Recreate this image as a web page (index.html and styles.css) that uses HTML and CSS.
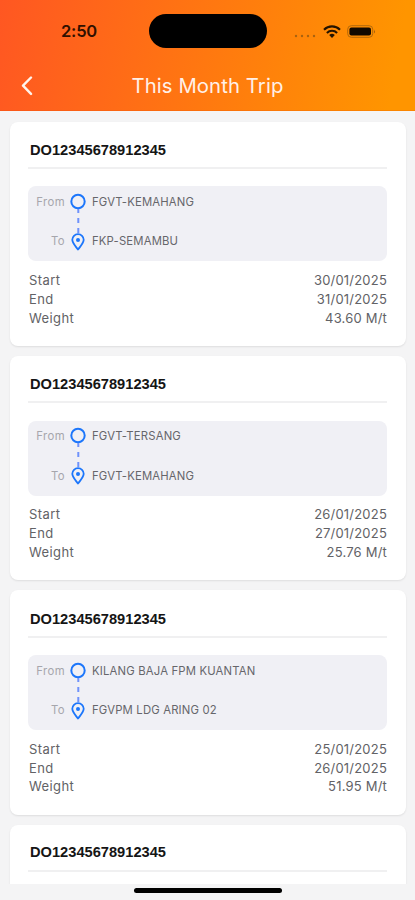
FILE: index.html
```html
<!DOCTYPE html>
<html lang="en">
<head>
<meta charset="utf-8">
<title>This Month Trip</title>
<link rel="stylesheet" href="styles.css">
</head>
<body>
<svg class="defs" aria-hidden="true">
  <symbol id="route" viewBox="0 0 18 60">
    <circle cx="9" cy="8.500" r="6.700" fill="none" stroke="#1c76fb" stroke-width="2"/>
    <path d="M9.300 16v4M9.300 25v5M9.300 35v5" fill="none" stroke="#6f92fb" stroke-width="2"/>
    <path d="M9 56.500C6.200 52.800 3.300 50 3.300 46.800a5.700 5.700 0 0 1 11.400 0C14.700 50 11.800 52.800 9 56.500Z" fill="none" stroke="#1c76fb" stroke-width="1.800" stroke-linejoin="round"/>
    <circle cx="9" cy="47" r="2" fill="#1c76fb"/>
  </symbol>
</svg>
<div class="screen">
  <header class="header">
    <div class="status">
      <span class="time">2:50</span>
      <span class="island"></span>
      <span class="indicators">
        <svg class="dots" viewBox="0 0 22 4"><g fill="#a96310"><circle cx="2" cy="2" r="1.200"/><circle cx="8" cy="2" r="1.200"/><circle cx="14" cy="2" r="1.200"/><circle cx="20" cy="2" r="1.200"/></g></svg>
        <svg class="wifi" viewBox="0 0 18 13"><g fill="none" stroke="#241400" stroke-width="2.100"><path d="M1 4.700a11.400 11.400 0 0 1 16 0"/><path d="M3.900 7.900a7.200 7.200 0 0 1 10.200 0"/></g><path d="M6.200 10.100a4 4 0 0 1 5.600 0L9 12.900Z" fill="#241400"/></svg>
        <svg class="battery" viewBox="0 0 29 13"><rect x=".7" y=".7" width="25" height="11.600" rx="3.600" fill="none" stroke="#b2690c"/><rect x="2.400" y="2.400" width="21.600" height="8.200" rx="2" fill="#120900"/><path d="M27 4.500q1.800 2 0 4Z" fill="#a45e0c"/></svg>
      </span>
    </div>
    <div class="nav">
      <svg class="back" viewBox="0 0 12 20"><path d="M10 1.500 2 9.700l8 8.200" fill="none" stroke="#fff4ec" stroke-width="2.400" stroke-linecap="round" stroke-linejoin="round"/></svg>
      <h1>This Month Trip</h1>
    </div>
  </header>
  <main class="list">
    <article class="card">
      <h2>DO12345678912345</h2>
      <div class="trip">
        <div class="ends"><span>From</span><span>To</span></div>
        <svg class="route"><use href="#route"/></svg>
        <div class="places"><span>FGVT-KEMAHANG</span><span>FKP-SEMAMBU</span></div>
      </div>
      <dl><div><dt>Start</dt><dd>30/01/2025</dd></div><div><dt>End</dt><dd>31/01/2025</dd></div><div><dt>Weight</dt><dd>43.60 M/t</dd></div></dl>
    </article>
    <article class="card">
      <h2>DO12345678912345</h2>
      <div class="trip">
        <div class="ends"><span>From</span><span>To</span></div>
        <svg class="route"><use href="#route"/></svg>
        <div class="places"><span>FGVT-TERSANG</span><span>FGVT-KEMAHANG</span></div>
      </div>
      <dl><div><dt>Start</dt><dd>26/01/2025</dd></div><div><dt>End</dt><dd>27/01/2025</dd></div><div><dt>Weight</dt><dd>25.76 M/t</dd></div></dl>
    </article>
    <article class="card">
      <h2 class="low">DO12345678912345</h2>
      <div class="trip">
        <div class="ends"><span>From</span><span>To</span></div>
        <svg class="route"><use href="#route"/></svg>
        <div class="places"><span>KILANG BAJA FPM KUANTAN</span><span>FGVPM LDG ARING 02</span></div>
      </div>
      <dl><div><dt>Start</dt><dd>25/01/2025</dd></div><div><dt>End</dt><dd>26/01/2025</dd></div><div><dt>Weight</dt><dd>51.95 M/t</dd></div></dl>
    </article>
    <article class="card">
      <h2 class="high">DO12345678912345</h2>
    </article>
  </main>
  <footer class="home"><span></span></footer>
</div>
</body>
</html>
```
FILE: styles.css
```css
* { box-sizing: border-box; }
body { margin: 0; background: #f4f4f5; font-family: Inter, sans-serif; }
.defs { display: none; }
.screen { width: 415px; height: 900px; display: flex; flex-direction: column; overflow: hidden; }
.header { height: 111px; flex: none; background: linear-gradient(100deg, #ff5722 0%, #ff9500 94%); box-shadow: inset 0 -1px #e84c0038; }
.status { height: 62px; display: grid; grid-template-columns: 148px 120px 147px; align-items: center; }
.time { padding-left: 61px; font-size: 16.500px; font-weight: 600; color: #301000; letter-spacing: -.2px; }
.island { height: 34px; border-radius: 17px; background: #000; margin-left: 1px; margin-right: 1px; }
.indicators { display: flex; align-items: center; padding-left: 26px; }
.dots { width: 22px; height: 4px; margin-top: 9px; }
.wifi { width: 18px; height: 13px; margin-left: 7px; }
.battery { width: 29px; height: 13px; margin-left: 6px; }
.nav { height: 48px; display: grid; grid-template-columns: 20px 1fr 20px; align-items: center; }
.back { width: 12px; height: 20px; margin-left: 21px; }
h1 { margin: 0; text-align: center; font-size: 20.300px; line-height: 24px; font-weight: 400; color: #fff0e8; letter-spacing: .1px; }
.list { height: 773px; flex: none; overflow: hidden; padding: 10.700px 9px 0 10px; display: flex; flex-direction: column; gap: 10px; }
.card { height: 224.400px; flex: none; padding: 0 19px 0 18px; border-radius: 8px; background: #fff; box-shadow: 0 1px 2px #00000018; }
h2 { height: 47.300px; margin: 0 0 17.500px; padding: 18px 0 0 2px; border-bottom: 2px solid #f0f0f1; font: bold 14.650px/20px "Liberation Sans", sans-serif; color: #151515; }
.low { padding-top: 19px; }
.high { padding-top: 17px; }
.trip { height: 75px; display: flex; border-radius: 8px; background: #f0f0f5; padding-top: 6.500px; }
.ends, .places { display: flex; flex-direction: column; gap: 23.500px; padding-top: 1px; font-size: 11.300px; line-height: 16px; }
.ends { width: 37px; text-align: right; color: #a6a6ac; letter-spacing: .4px; }
.route { width: 18px; height: 60px; margin: 0 5px 0 4px; }
.places { color: #66666b; letter-spacing: .18px; }
dl { margin: 9.600px 0 0; font-size: 13px; line-height: 18.800px; color: #626266; letter-spacing: .4px; }
dl div { display: flex; justify-content: space-between; padding-left: 1px; }
dd { margin: 0; letter-spacing: .2px; }
.home { flex: 1; display: flex; justify-content: center; padding-top: 4px; }
.home span { width: 148px; height: 5px; border-radius: 3px; background: #000; }
```
